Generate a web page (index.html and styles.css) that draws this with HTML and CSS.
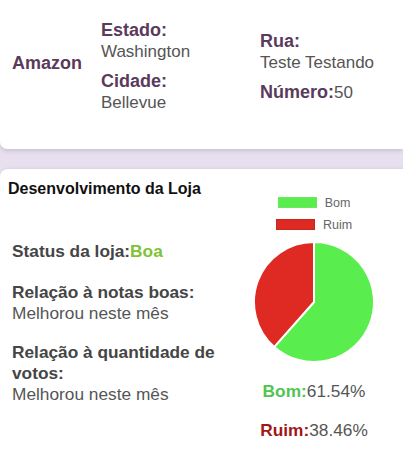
FILE: index.html
```html
<!DOCTYPE html>
<html lang="pt">
<head>
<meta charset="utf-8">
<title>Loja</title>
<link rel="stylesheet" href="styles.css">
</head>
<body>
<section class="store-card">
  <div class="store-name">Amazon</div>
  <div class="col col-1">
    <div class="field"><div class="label">Estado:</div><div class="value">Washington</div></div>
    <div class="field"><div class="label">Cidade:</div><div class="value">Bellevue</div></div>
  </div>
  <div class="col col-2">
    <div class="field"><div class="label">Rua:</div><div class="value">Teste Testando</div></div>
    <div class="field"><div class="inline"><span class="label">Número:</span><span class="value">50</span></div></div>
  </div>
</section>

<section class="dev-card">
  <div class="dev-left">
    <h2 class="dev-title">Desenvolvimento da Loja</h2>
    <p class="status">Status da loja:<span class="good">Boa</span></p>
    <div class="block">
      <div class="b-label">Relação à notas boas:</div>
      <div class="b-value">Melhorou neste mês</div>
    </div>
    <div class="block">
      <div class="b-label">Relação à quantidade de votos:</div>
      <div class="b-value">Melhorou neste mês</div>
    </div>
  </div>
  <div class="dev-right">
    <div class="legend">
      <div class="legend-item"><span class="swatch swatch-green"></span><span>Bom</span></div>
      <div class="legend-item"><span class="swatch swatch-red"></span><span>Ruim</span></div>
    </div>
    <svg class="pie" viewBox="0 0 120 120" width="120" height="120">
      <path d="M60,60 L60,0 A60,60 0 1 1 20.24,104.94 Z" fill="#59ee4e" stroke="#fff" stroke-width="2" stroke-linejoin="round"/>
      <path d="M60,60 L20.24,104.94 A60,60 0 0 1 60,0 Z" fill="#de2a23" stroke="#fff" stroke-width="2" stroke-linejoin="round"/>
    </svg>
    <div class="pct"><span class="pct-bom">Bom:</span>61.54%</div>
    <div class="pct pct-2"><span class="pct-ruim">Ruim:</span>38.46%</div>
  </div>
</section>
</body>
</html>
```

FILE: styles.css
```css
* { box-sizing: border-box; }
html, body { margin: 0; padding: 0; }
body {
  background: #e9e0ef;
  font-family: "Liberation Sans", Arial, sans-serif;
  width: 403px;
  height: 454px;
  overflow: hidden;
}
.store-card {
  background: #fff;
  height: 149px;
  padding: 0 0 16px 12px;
  border-radius: 0 0 0 7px;
  box-shadow: 0 2px 4px rgba(0,0,0,0.14);
  display: grid;
  grid-template-columns: 89px 159px auto;
  align-items: center;
}
.store-name {
  font-weight: bold;
  font-size: 18px;
  line-height: 21px;
  color: #5b3a5c;
  margin-bottom: 7px;
}
.field + .field { margin-top: 9px; }
.label {
  font-weight: bold;
  font-size: 18px;
  line-height: 21px;
  color: #5b3a5c;
}
.value {
  font-size: 17px;
  line-height: 21px;
  color: #555;
}
.inline { line-height: 21px; }
.inline .label, .inline .value { display: inline; }

.dev-card {
  margin-top: 20px;
  background: #fff;
  border-radius: 8px 0 0 0;
  height: 285px;
  padding: 10px 0 0 8px;
  display: flex;
  box-shadow: 0 -1px 3px rgba(0,0,0,0.06);
}
.dev-left { width: 222px; }
.dev-title {
  margin: 0;
  font-size: 16px;
  line-height: 20px;
  font-weight: bold;
  color: #111;
}
.status {
  margin: 42px 0 0 4px;
  font-size: 17.3px;
  line-height: 21px;
  font-weight: bold;
  color: #454545;
}
.good { color: #7ec235; }
.block { margin: 20px 0 0 4px; font-size: 17.3px; line-height: 21px; }
.block + .block { margin-top: 18px; }
.b-label { font-weight: bold; color: #454545; }
.b-value { color: #555; }

.dev-right {
  width: 168px;
  display: flex;
  flex-direction: column;
  align-items: center;
  padding-top: 18px;
}
.legend {
  display: flex;
  flex-direction: column;
  align-items: center;
  gap: 11px;
}
.legend-item {
  display: flex;
  align-items: center;
  gap: 8px;
  height: 11px;
  font-size: 12.5px;
  color: #666;
}
.swatch { width: 39px; height: 11px; display: block; }
.swatch-green { background: #59ee4e; border: 1px solid #6ee864; }
.swatch-red { background: #de2a23; border: 1px solid #c42620; }
.pie { display: block; margin-top: 12px; }
.pct {
  margin-top: 19px;
  font-size: 17.3px;
  line-height: 21px;
  color: #555;
}
.pct-2 { margin-top: 18px; }
.pct-bom { font-weight: bold; color: #4fc54f; }
.pct-ruim { font-weight: bold; color: #a01717; }
```
